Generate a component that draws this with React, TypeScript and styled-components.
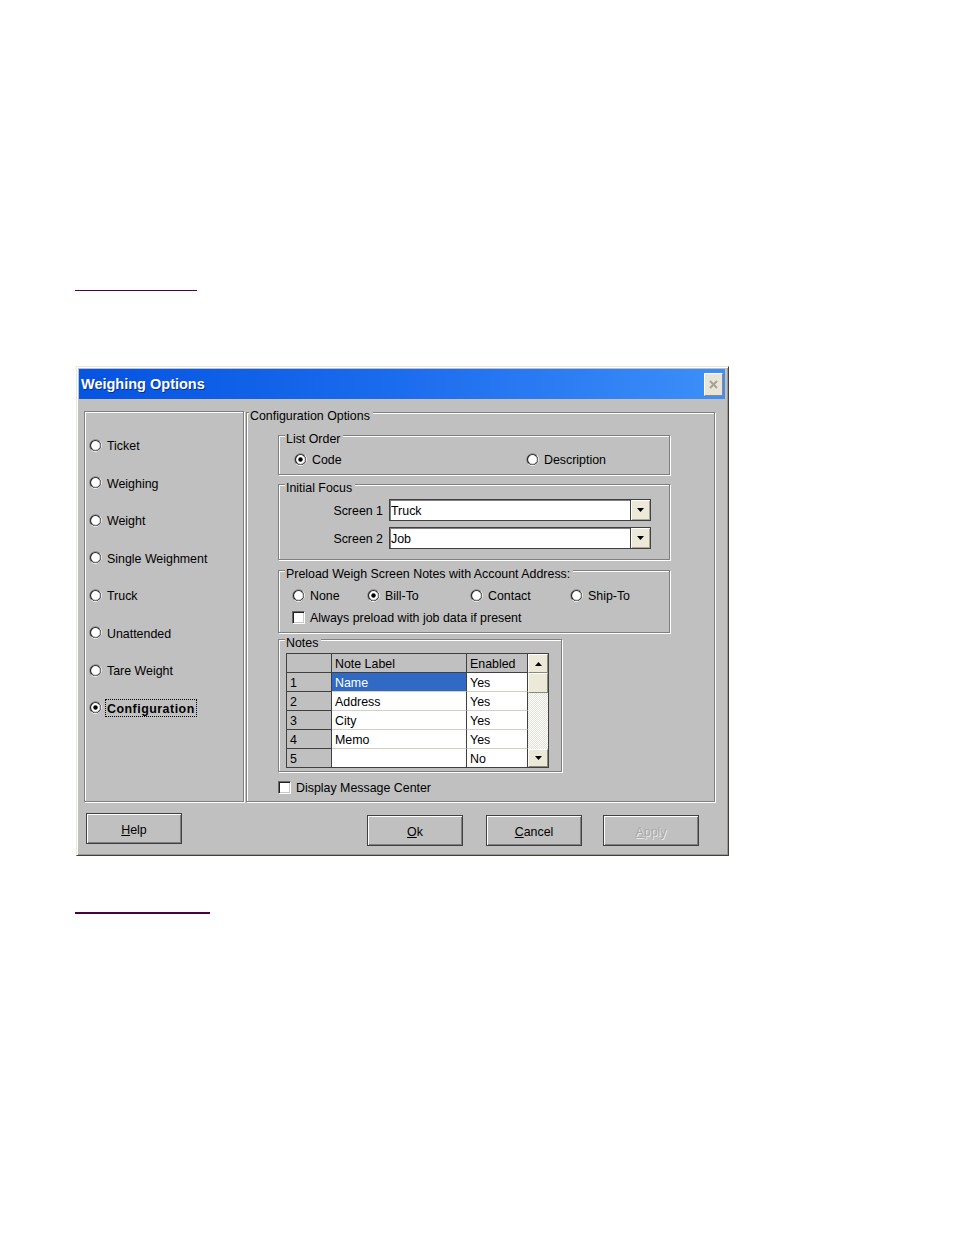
import React from 'react';
import styled, { createGlobalStyle } from 'styled-components';

const GlobalStyle = createGlobalStyle`
  html, body { margin: 0; padding: 0; background: #ffffff; }
  body { font-family: "Liberation Sans", Arial, sans-serif; color: #000; }
  * { box-sizing: border-box; }
`;

const Page = styled.div`
  width: 954px;
  height: 1235px;
  padding-left: 75px;
  display: flex;
  flex-direction: column;
  align-items: flex-start;
  overflow: hidden;
`;

const LinkRule = styled.a<{ $w: number; $h: number; $mt: number }>`
  display: block;
  width: ${p => p.$w}px;
  height: ${p => p.$h}px;
  margin-top: ${p => p.$mt}px;
  background: #4b0046;
`;

const Dialog = styled.div`
  margin-top: 75px;
  margin-left: 1px;
  width: 653px;
  height: 490px;
  padding: 2px 3px 3px 2px;
  background: #c0c0c0;
  border: 1px solid;
  border-color: #ece9d8 #404040 #404040 #ece9d8;
  box-shadow: inset 1px 1px 0 #fffef8, inset -1px -1px 0 #9d9a8c;
  display: flex;
  flex-direction: column;
  font-size: 12.4px;
`;

const TitleBar = styled.div`
  height: 30px;
  flex: none;
  display: flex;
  align-items: center;
  justify-content: space-between;
  padding: 0 2px;
  background: linear-gradient(to right, #0554e2 0%, #1c6cee 50%, #3d8ff8 100%);
`;

const TitleText = styled.span`
  color: #fff;
  font-weight: bold;
  font-size: 14.5px;
  text-shadow: 1px 1px 0 #0b2f8a;
`;

const CloseButton = styled.span`
  width: 19px;
  height: 23px;
  display: flex;
  align-items: center;
  justify-content: center;
  background: #e8e5d8;
  border: 1px solid;
  border-color: #ffffff #8b897d #8b897d #ffffff;
`;

const Body = styled.div`
  flex: 1;
  padding: 12px 10px 0 5px;
  display: flex;
  flex-direction: column;
`;

const MainRow = styled.div`
  display: flex;
  gap: 2px;
  height: 391px;
  flex: none;
`;

const NavPanel = styled.div`
  width: 160px;
  height: 391px;
  border: 1px solid #808080;
  box-shadow: inset 1px 1px 0 #fff, 1px 1px 0 #fff;
  padding: 24px 0 0 4px;
  display: flex;
  flex-direction: column;
  gap: 19.5px;
`;

const Group = styled.div<{ $h: number; $w: number; $mt?: number; $pad: string }>`
  position: relative;
  flex: none;
  width: ${p => p.$w}px;
  height: ${p => p.$h}px;
  margin-top: ${p => p.$mt ?? 0}px;
  padding: ${p => p.$pad};
  border: 1px solid #808080;
  box-shadow: inset 1px 1px 0 #fff, 1px 1px 0 #fff;
`;

const ColumnGroup = styled(Group)`
  display: flex;
  flex-direction: column;
`;

const Legend = styled.span<{ $left: number }>`
  position: absolute;
  top: -4px;
  left: ${p => p.$left}px;
  padding: 0 3px 0 1px;
  line-height: 14px;
  background: #c0c0c0;
  white-space: nowrap;
`;

const RadioRow = styled.div`
  display: flex;
  align-items: center;
`;

const OptionLabel = styled.label<{ $w?: number }>`
  display: flex;
  align-items: center;
  gap: 5px;
  height: 18px;
  flex: none;
  width: ${p => (p.$w ? `${p.$w}px` : 'auto')};
  white-space: nowrap;
`;

const LabelText = styled.span`
  padding-top: 2px;
`;

const RadioIcon = styled.svg`
  flex: none;
  display: block;
`;

const CheckBox = styled.span`
  width: 13px;
  height: 13px;
  flex: none;
  background: #fff;
  border: 1px solid;
  border-color: #6a6a6a #ffffff #ffffff #6a6a6a;
  box-shadow: inset 1px 1px 0 #202020, inset -1px -1px 0 #c8c8c8;
`;

const FocusText = styled.span`
  font-weight: bold;
  letter-spacing: 0.5px;
  outline: 1px dotted #000;
  padding: 2px 1px 0 1px;
  margin-left: -1px;
`;

const FocusGrid = styled.div`
  display: grid;
  grid-template-columns: 104px 262px;
  column-gap: 6px;
  row-gap: 6px;
  align-items: center;
`;

const FieldLabel = styled.span`
  text-align: right;
  white-space: nowrap;
  padding-top: 2px;
`;

const Combo = styled.div`
  height: 22px;
  display: flex;
  background: #fff;
  border: 1px solid #404040;
  box-shadow: inset 1px 1px 0 #808080;
`;

const ComboText = styled.span`
  flex: 1;
  display: flex;
  align-items: center;
  padding: 2px 0 0 1px;
`;

const DropButton = styled.span`
  width: 20px;
  flex: none;
  display: flex;
  align-items: center;
  justify-content: center;
  background: #ece9d8;
  border-left: 1px solid #404040;
  box-shadow: inset 1px 1px 0 #fff, inset -1px -1px 0 #aca899;
`;

const CheckRow = styled.div<{ $mt?: number }>`
  display: flex;
  margin-top: ${p => p.$mt ?? 0}px;
`;

const GridFrame = styled.div`
  display: flex;
  width: 263px;
  border: 1px solid #404040;
  background: #c0c0c0;
`;

const GridTable = styled.div`
  display: grid;
  grid-template-columns: 45px 135px 61px;
  grid-template-rows: repeat(5, 19px) 18px;
`;

type CellKind = 'head' | 'num' | 'data' | 'sel';

const Cell = styled.div<{ $kind: CellKind; $last?: boolean }>`
  display: flex;
  align-items: center;
  padding: 2px 0 0 3px;
  white-space: nowrap;
  background: ${p => (p.$kind === 'head' || p.$kind === 'num' ? '#c0c0c0' : p.$kind === 'sel' ? '#316ac5' : '#ffffff')};
  color: ${p => (p.$kind === 'sel' ? '#ffffff' : '#000000')};
  border-right: 1px solid #404040;
  border-bottom: ${p =>
    p.$last ? 'none' : p.$kind === 'head' || p.$kind === 'num' ? '1px solid #404040' : '1px solid #d4d0c8'};
`;

const ScrollBar = styled.div`
  width: 20px;
  flex: none;
  display: flex;
  flex-direction: column;
`;

const ScrollPart = styled.div<{ $h: number }>`
  height: ${p => p.$h}px;
  flex: none;
  display: flex;
  align-items: center;
  justify-content: center;
  background: #ece9d8;
  border: 1px solid;
  border-color: #ffffff #8b897d #8b897d #ffffff;
`;

const ScrollTrack = styled.div`
  flex: 1;
  background-color: #f6f5f0;
  background-image: repeating-conic-gradient(#ffffff 0 25%, #e4e2d6 0 50%);
  background-size: 2px 2px;
`;

const ButtonRow = styled.div`
  display: flex;
  align-items: flex-start;
  margin-top: 11px;
  padding: 0 16px 0 2px;
`;

const Spacer = styled.div`
  flex: 1;
`;

const PushButton = styled.button<{ $mt?: number; $ml?: number; $off?: boolean }>`
  width: 96px;
  height: 31px;
  flex: none;
  margin-top: ${p => p.$mt ?? 0}px;
  margin-left: ${p => p.$ml ?? 0}px;
  padding: 2px 0 0 0;
  font-family: "Liberation Sans", Arial, sans-serif;
  font-size: 12.4px;
  color: ${p => (p.$off ? '#a9a9a9' : '#000')};
  text-shadow: ${p => (p.$off ? '1px 1px 0 #e8e8e8' : 'none')};
  background: #c0c0c0;
  border: 1px solid #404040;
  box-shadow: inset 1px 1px 0 #fff, inset -1px -1px 0 #808080;
`;

const Arrow = ({ up }: { up?: boolean }) => (
  <svg width="7" height="4" viewBox="0 0 7 4">
    <polygon points={up ? '3.5,0 7,4 0,4' : '0,0 7,0 3.5,4'} fill="#000" />
  </svg>
);

const RadioGlyph = ({ on }: { on?: boolean }) => (
  <RadioIcon width="13" height="13" viewBox="0 0 13 13">
    <path d="M10.74 2.26 A6 6 0 0 0 2.26 10.74" fill="none" stroke="#8a8a8a" strokeWidth="1" />
    <path d="M2.26 10.74 A6 6 0 0 0 10.74 2.26" fill="none" stroke="#ffffff" strokeWidth="1" />
    <circle cx="6.5" cy="6.5" r="5" fill="#fff" stroke="#2a2a2a" strokeWidth="1.2" />
    <path d="M3.3 9.7 A4.5 4.5 0 0 0 9.7 3.3" fill="none" stroke="#d8d8d8" strokeWidth="1" />
    {on && <circle cx="6.5" cy="6.5" r="2.2" fill="#000" />}
  </RadioIcon>
);

const Radio = ({ label, on, w }: { label: string; on?: boolean; w?: number }) => (
  <OptionLabel $w={w}>
    <RadioGlyph on={on} />
    <LabelText>{label}</LabelText>
  </OptionLabel>
);

const navItems = ['Ticket', 'Weighing', 'Weight', 'Single Weighment', 'Truck', 'Unattended', 'Tare Weight'];

const rows: [string, string][] = [
  ['Name', 'Yes'],
  ['Address', 'Yes'],
  ['City', 'Yes'],
  ['Memo', 'Yes'],
  ['', 'No'],
];

export default function App() {
  return (
    <Page>
      <GlobalStyle />
      <LinkRule href="#" $w={122} $h={1} $mt={290} aria-label="link" />
      <Dialog>
        <TitleBar>
          <TitleText>Weighing Options</TitleText>
          <CloseButton>
            <svg width="9" height="9" viewBox="0 0 9 9">
              <path d="M1 1 L8 8 M8 1 L1 8" stroke="#a4a294" strokeWidth="2" />
            </svg>
          </CloseButton>
        </TitleBar>
        <Body>
          <MainRow>
            <NavPanel>
              {navItems.map(n => (
                <Radio key={n} label={n} />
              ))}
              <OptionLabel>
                <RadioGlyph on />
                <FocusText>Configuration</FocusText>
              </OptionLabel>
            </NavPanel>
            <ColumnGroup $w={469} $h={390} $mt={1} $pad="22px 0 0 31px">
              <Legend $left={2}>Configuration Options</Legend>
              <Group $w={392} $h={40} $pad="14px 0 0 15px">
                <Legend $left={6}>List Order</Legend>
                <RadioRow>
                  <Radio label="Code" on w={232} />
                  <Radio label="Description" />
                </RadioRow>
              </Group>
              <Group $w={392} $h={76} $mt={9} $pad="14px 0 0 0">
                <Legend $left={6}>Initial Focus</Legend>
                <FocusGrid>
                  <FieldLabel>Screen 1</FieldLabel>
                  <Combo>
                    <ComboText>Truck</ComboText>
                    <DropButton>
                      <Arrow />
                    </DropButton>
                  </Combo>
                  <FieldLabel>Screen 2</FieldLabel>
                  <Combo>
                    <ComboText>Job</ComboText>
                    <DropButton>
                      <Arrow />
                    </DropButton>
                  </Combo>
                </FocusGrid>
              </Group>
              <Group $w={392} $h={63} $mt={10} $pad="15px 0 0 13px">
                <Legend $left={6}>Preload Weigh Screen Notes with Account Address:</Legend>
                <RadioRow>
                  <Radio label="None" w={75} />
                  <Radio label="Bill-To" on w={103} />
                  <Radio label="Contact" w={100} />
                  <Radio label="Ship-To" />
                </RadioRow>
                <CheckRow $mt={4}>
                  <OptionLabel>
                    <CheckBox />
                    <LabelText>Always preload with job data if present</LabelText>
                  </OptionLabel>
                </CheckRow>
              </Group>
              <Group $w={284} $h={133} $mt={6} $pad="13px 0 0 7px">
                <Legend $left={6}>Notes</Legend>
                <GridFrame>
                  <GridTable>
                    <Cell $kind="head" />
                    <Cell $kind="head">Note Label</Cell>
                    <Cell $kind="head">Enabled</Cell>
                    {rows.map(([label, en], i) => {
                      const last = i === rows.length - 1;
                      return (
                        <React.Fragment key={i}>
                          <Cell $kind="num" $last={last}>
                            {i + 1}
                          </Cell>
                          <Cell $kind={i === 0 ? 'sel' : 'data'} $last={last}>
                            {label}
                          </Cell>
                          <Cell $kind="data" $last={last}>
                            {en}
                          </Cell>
                        </React.Fragment>
                      );
                    })}
                  </GridTable>
                  <ScrollBar>
                    <ScrollPart $h={19}>
                      <Arrow up />
                    </ScrollPart>
                    <ScrollPart $h={20} />
                    <ScrollTrack />
                    <ScrollPart $h={18}>
                      <Arrow />
                    </ScrollPart>
                  </ScrollBar>
                </GridFrame>
              </Group>
              <CheckRow $mt={6}>
                <OptionLabel>
                  <CheckBox />
                  <LabelText>Display Message Center</LabelText>
                </OptionLabel>
              </CheckRow>
            </ColumnGroup>
          </MainRow>
          <ButtonRow>
            <PushButton>
              <u>H</u>elp
            </PushButton>
            <Spacer />
            <PushButton $mt={2}>
              <u>O</u>k
            </PushButton>
            <PushButton $mt={2} $ml={23}>
              <u>C</u>ancel
            </PushButton>
            <PushButton $mt={2} $ml={21} $off>
              <u>A</u>pply
            </PushButton>
          </ButtonRow>
        </Body>
      </Dialog>
      <LinkRule href="#" $w={135} $h={2} $mt={56} aria-label="link" />
    </Page>
  );
}
